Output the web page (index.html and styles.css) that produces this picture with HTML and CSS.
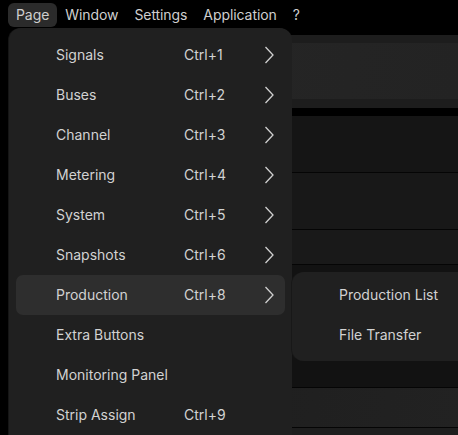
FILE: index.html
```html
<!DOCTYPE html>
<html>
<head>
<meta charset="utf-8">
<link rel="stylesheet" href="styles.css">
</head>
<body>
<div class="menubar">
  <span class="mb-item active">Page</span>
  <span class="mb-item">Window</span>
  <span class="mb-item">Settings</span>
  <span class="mb-item">Application</span>
  <span class="mb-item">?</span>
</div>
<div class="workspace">
  <div class="gap8"></div>
  <div class="strip"></div>
  <div class="panel p1"></div>
  <div class="strip s2"></div>
  <div class="gap8"></div>
  <div class="panel p2"></div>
  <div class="panel p3"></div>
  <div class="panel p4"></div>
  <div class="panel p5"></div>
  <div class="panel p6"></div>
  <div class="panel p7"></div>
</div>

<div class="menu">
  <div class="row"><span class="lbl">Signals</span><span class="sc">Ctrl+1</span><svg class="chev" viewBox="0 0 10 18"><path d="M1.5 1 L9 9 L1.5 17"/></svg></div>
  <div class="row"><span class="lbl">Buses</span><span class="sc">Ctrl+2</span><svg class="chev" viewBox="0 0 10 18"><path d="M1.5 1 L9 9 L1.5 17"/></svg></div>
  <div class="row"><span class="lbl">Channel</span><span class="sc">Ctrl+3</span><svg class="chev" viewBox="0 0 10 18"><path d="M1.5 1 L9 9 L1.5 17"/></svg></div>
  <div class="row"><span class="lbl">Metering</span><span class="sc">Ctrl+4</span><svg class="chev" viewBox="0 0 10 18"><path d="M1.5 1 L9 9 L1.5 17"/></svg></div>
  <div class="row"><span class="lbl">System</span><span class="sc">Ctrl+5</span><svg class="chev" viewBox="0 0 10 18"><path d="M1.5 1 L9 9 L1.5 17"/></svg></div>
  <div class="row"><span class="lbl">Snapshots</span><span class="sc">Ctrl+6</span><svg class="chev" viewBox="0 0 10 18"><path d="M1.5 1 L9 9 L1.5 17"/></svg></div>
  <div class="row hl"><span class="lbl">Production</span><span class="sc">Ctrl+8</span><svg class="chev" viewBox="0 0 10 18"><path d="M1.5 1 L9 9 L1.5 17"/></svg></div>
  <div class="row"><span class="lbl">Extra Buttons</span></div>
  <div class="row"><span class="lbl">Monitoring Panel</span></div>
  <div class="row"><span class="lbl">Strip Assign</span><span class="sc">Ctrl+9</span></div>
</div>

<div class="submenu">
  <div class="srow">Production List</div>
  <div class="srow">File Transfer</div>
</div>
</body>
</html>
```

FILE: styles.css
```css
html, body {
  margin: 0;
  padding: 0;
  background: #000;
  width: 458px;
  height: 435px;
  overflow: hidden;
  font-family: Inter, "Noto Sans", sans-serif;
  font-size: 14px;
  color: #d2d2d2;
}

.menubar {
  height: 28px;
  display: flex;
  align-items: center;
  padding-left: 8px;
  box-sizing: border-box;
  padding-top: 2px;
}

.mb-item {
  height: 24px;
  line-height: 24px;
  padding: 0 8px;
  border-radius: 6px;
  color: #cfcfcf;
  letter-spacing: -0.08px;
}

.mb-item.active {
  background: #2b2b2b;
}

.workspace {
  display: flex;
  flex-direction: column;
  margin-left: 20px;
}

.gap8 { height: 8px; background: #000; }
.gap8:first-child { height: 7px; }

.strip { height: 8px; background: #1d1d1d; }
.strip.s2 { height: 9px; }

.panel { border-bottom: 1px solid #050505; }
.p1 { height: 56px; background: linear-gradient(100deg, #272727, #232323); border-bottom: none; }
.p2 { height: 56px; background: #151515; }
.p3 { height: 56px; background: #181818; }
.p4 { height: 34px; background: #191919; }
.p5 { height: 122px; background: #121212; }
.p6 { height: 39px; background: linear-gradient(100deg, #1c1c1c, #222); }
.p7 { height: 20px; background: #1e1e1e; }

.menu {
  position: absolute;
  left: 9px;
  top: 28px;
  width: 283px;
  height: 420px;
  box-sizing: border-box;
  padding: 7px;
  background: #202020;
  border-radius: 12px;
  box-shadow: -1px 0 0 #151515;
}

.row {
  height: 40px;
  box-sizing: border-box;
  padding-bottom: 2px;
  display: flex;
  align-items: center;
  padding-left: 40px;
  border-radius: 7px;
  position: relative;
}

.row.hl { background: #2e2e2e; }

.lbl { width: 128px; }
.sc { width: 60px; }

.chev {
  position: absolute;
  left: 248px;
  top: 11px;
  width: 10px;
  height: 18px;
}
.chev path {
  fill: none;
  stroke: #cfcfcf;
  stroke-width: 1.3;
}

.submenu {
  position: absolute;
  left: 292px;
  top: 272px;
  width: 166px;
  height: 89px;
  box-sizing: border-box;
  padding-top: 3px;
  background: #202020;
  border-radius: 12px 0 0 12px;
  box-shadow: -1px 0 0 #181818;
}

.srow {
  height: 40px;
  line-height: 39px;
  padding-left: 47px;
}
```
